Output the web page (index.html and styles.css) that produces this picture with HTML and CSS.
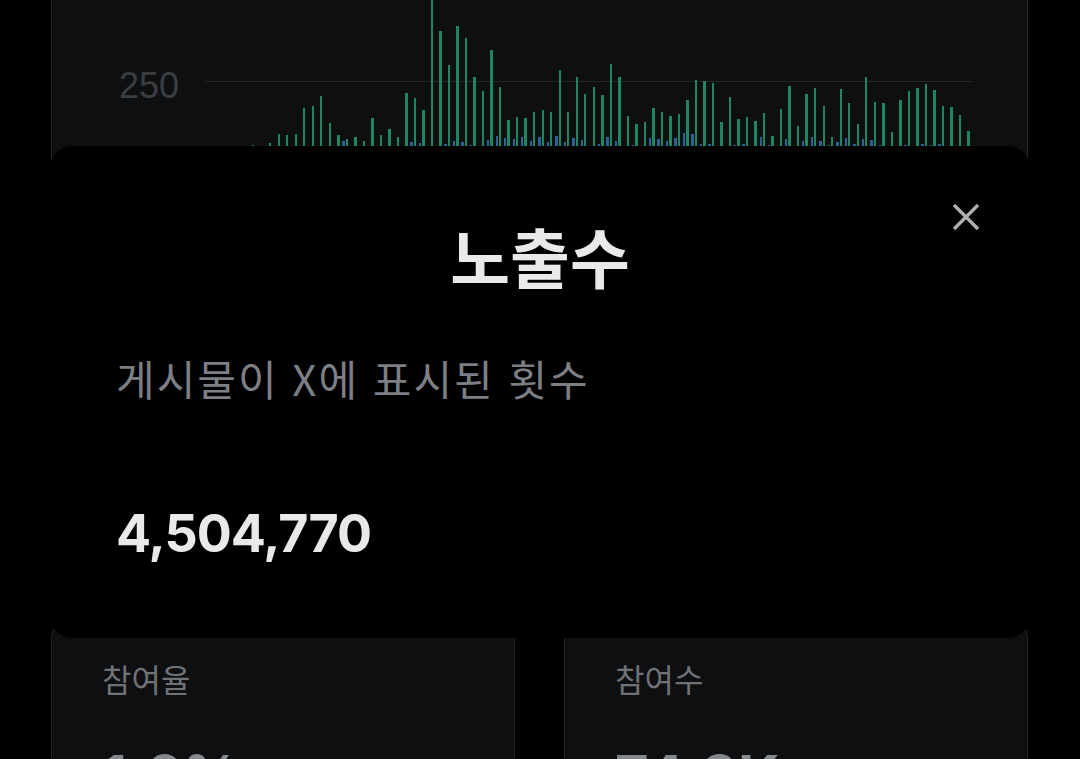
FILE: index.html
```html
<!DOCTYPE html>
<html lang="ko">
<head>
    <meta charset="UTF-8">
    <meta name="viewport" content="width=device-width, initial-scale=1.0">
    <title>노출수</title>
    <link rel="stylesheet" href="styles.css">
</head>
<body>

    <div class="page">
        <div class="chart-card">
            <div class="y-axis">
                <span class="y-label">250</span>
            </div>
            <div class="plot">
                <div class="grid-line"></div>
                <div id="bars" class="bars"></div>
            </div>
        </div>

        <div class="stats">
            <div class="stat-card">
                <div class="stat-label">참여율</div>
                <div class="stat-value">1.6%</div>
            </div>
            <div class="stat-card">
                <div class="stat-label">참여수</div>
                <div class="stat-value">74.3K</div>
            </div>
        </div>
    </div>

    <div class="sheet">
        <button class="close" aria-label="닫기">
            <svg width="28" height="28" viewBox="0 0 28 28">
                <path d="M2 2 L26 26 M26 2 L2 26" stroke="#aeb0b2" stroke-width="3.2" stroke-linecap="butt" fill="none"/>
            </svg>
        </button>
        <h2 class="sheet-title">노출수</h2>
        <p class="sheet-desc">게시물이 X에 표시된 횟수</p>
        <div class="sheet-value">4,504,770</div>
    </div>

    <script>
        const barsEl = document.getElementById("bars");

        // daily impressions (green) and engagements (blue), 90 days
        const impressions = [
            0, 0, 0, 0, 0, 2, 0, 4, 13, 12,
            13, 39, 41, 51, 24, 12, 8, 10, 6, 29,
            12, 18, 10, 54, 49, 37, 160, 116, 82, 121,
            109, 70, 56, 97, 60, 27, 30, 29, 35, 37,
            35, 77, 35, 70, 53, 60, 52, 83, 70, 31,
            23, 25, 39, 35, 31, 33, 47, 67, 66, 64,
            25, 50, 28, 30, 26, 34, 11, 38, 61, 21,
            53, 59, 41, 10, 58, 44, 23, 70, 45, 44,
            15, 47, 56, 59, 63, 57, 41, 40, 32, 16
        ];
        const engagements = [
            0, 0, 0, 0, 0, 0, 0, 0, 0, 0,
            0, 0, 0, 0, 0, 0, 6, 0, 0, 0,
            0, 0, 0, 0, 5, 4, 0, 0, 3, 6,
            5, 2, 0, 7, 11, 9, 8, 10, 6, 10,
            5, 11, 5, 9, 7, 0, 3, 10, 6, 0,
            2, 0, 9, 8, 6, 9, 14, 13, 3, 3,
            0, 0, 2, 3, 0, 10, 2, 0, 8, 0,
            6, 10, 6, 2, 5, 9, 3, 8, 7, 2,
            0, 0, 2, 0, 3, 2, 3, 0, 0, 0
        ];

        impressions.forEach((value, i) => {
            let day = document.createElement("div");
            day.classList.add("day");

            let blue = document.createElement("div");
            blue.classList.add("bar", "bar-blue");
            blue.style.height = engagements[i] + "px";

            let green = document.createElement("div");
            green.classList.add("bar", "bar-green");
            green.style.height = value + "px";

            day.appendChild(blue);
            day.appendChild(green);
            barsEl.appendChild(day);
        });
    </script>

</body>
</html>
```

FILE: styles.css
```css
body {
    margin: 0;
    height: 759px;
    overflow: hidden;
    background-color: #000;
    font-family: "Noto Sans CJK KR", "Noto Sans", sans-serif;
}
.page {
    padding: 0 52px 0 51px;
}

/* chart card behind the sheet */
.chart-card {
    display: flex;
    align-items: flex-start;
    height: 600px;
    padding: 0 55px 0 67px;
    background-color: #0e0f11;
    border: 1px solid #222427;
    border-top: none;
    border-radius: 0 0 16px 16px;
    overflow: hidden;
}
.y-axis {
    width: 86px;
    flex-shrink: 0;
    padding-top: 66px;
}
.y-label {
    display: block;
    font-family: "Liberation Sans", Arial, sans-serif;
    font-size: 36px;
    line-height: 40px;
    color: #3b3e41;
}
.plot {
    position: relative;
    flex: 1;
    height: 147px;
}
.grid-line {
    position: absolute;
    top: 81px;
    left: 0;
    right: 0;
    height: 1px;
    background-color: #24262a;
}
.bars {
    position: relative;
    display: flex;
    align-items: flex-end;
    height: 100%;
}
.day {
    flex: 1;
    display: flex;
    align-items: flex-end;
    gap: 1px;
    padding-left: 1px;
}
.bar {
    width: 2.4px;
    flex-shrink: 0;
}
.bar-green {
    background-color: #1d8560;
}
.bar-blue {
    background-color: #2a6293;
}

/* stat cards */
.stats {
    display: grid;
    grid-template-columns: 1fr 1fr;
    column-gap: 49px;
    margin-top: 20px;
}
.stat-card {
    height: 300px;
    padding: 40px 50px;
    background-color: #0e0f11;
    border: 1px solid #1f2124;
    border-radius: 16px;
}
.stat-label {
    font-size: 32px;
    line-height: 1;
    color: #6f7276;
}
.stat-value {
    margin-top: 53px;
    font-family: Inter, "Liberation Sans", sans-serif;
    font-weight: 700;
    font-size: 58px;
    line-height: 1;
    color: #85888b;
}

/* bottom sheet */
.sheet {
    position: fixed;
    left: 50px;
    top: 146px;
    width: 980px;
    height: 492px;
    box-sizing: border-box;
    padding: 77px 66px 0;
    background-color: #000;
    border-radius: 22px;
}
.close {
    position: absolute;
    top: 57px;
    right: 50px;
    width: 28px;
    height: 28px;
    padding: 0;
    border: none;
    background: none;
    cursor: pointer;
}
.close svg {
    display: block;
}
.sheet-title {
    margin: 0;
    text-align: center;
    font-size: 65px;
    font-weight: 700;
    line-height: 1;
    color: #e7e9ea;
}
.sheet-desc {
    margin: 69px 0 0;
    font-size: 42px;
    line-height: 1;
    letter-spacing: 2px;
    color: #7c7f83;
}
.sheet-value {
    margin-top: 109px;
    font-family: Inter, "Liberation Sans", sans-serif;
    font-weight: 700;
    font-size: 52px;
    line-height: 1;
    letter-spacing: -1px;
    color: #e7e9ea;
}
```
